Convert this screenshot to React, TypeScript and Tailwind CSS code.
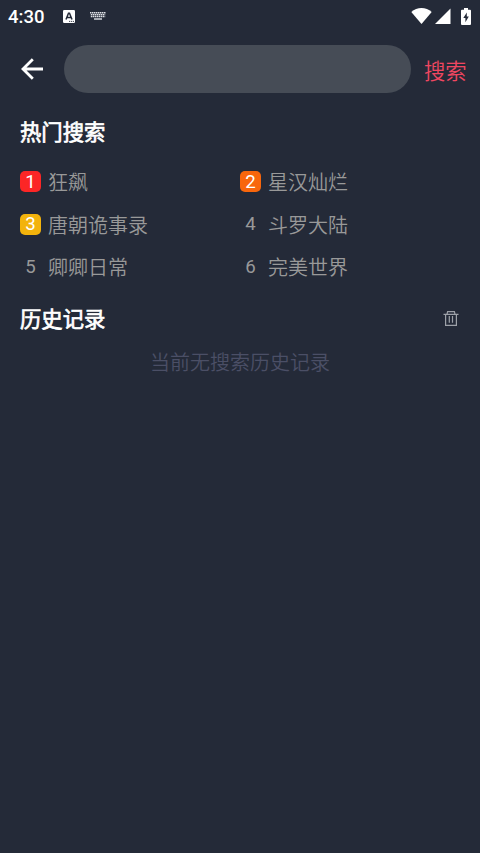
import clsx from "clsx";

interface HotItem {
  rank: number;
  title: string;
}

const hotItems: HotItem[] = [
  { rank: 1, title: "狂飙" },
  { rank: 2, title: "星汉灿烂" },
  { rank: 3, title: "唐朝诡事录" },
  { rank: 4, title: "斗罗大陆" },
  { rank: 5, title: "卿卿日常" },
  { rank: 6, title: "完美世界" },
];

const rankColors: Record<number, string> = {
  1: "bg-[#fc2626] text-white",
  2: "bg-[#f8660c] text-white",
  3: "bg-[#f3b30c] text-white",
};

function StatusBar() {
  return (
    <div className="flex h-8 items-center justify-between pl-2 pr-[9px] text-white">
      <div className="flex items-center">
        <span className="w-[55px] pt-px text-[18.5px] leading-8 font-medium">4:30</span>
        <svg className="h-[13px] w-3" viewBox="0 0 12 13">
          <rect width="12" height="13" rx="1.2" fill="#fff" />
          <path d="M3 9.5 L5.5 3.3 H6.5 L9 9.5 M4 7.4 H8" fill="none" stroke="#242a38" strokeWidth="1.5" />
          <path d="M6 11.4 H11" stroke="#242a38" strokeWidth="0.9" strokeDasharray="1.2 0.7" />
        </svg>
        <svg className="ml-[15px] h-2 w-4" viewBox="0 0 16 8">
          <path d="M0 0.8 H16 M0.8 2.7 H15.2 M0.8 4.6 H15.2" stroke="#dfe1e6" strokeWidth="1.4" strokeDasharray="1.5 0.5" />
          <path d="M4 7 H12" stroke="#dfe1e6" strokeWidth="1.4" />
        </svg>
      </div>
      <div className="flex items-center">
        <svg className="h-4 w-[21px]" viewBox="0 0 21 16">
          <path d="M0.3 4 C6 -1.2 15 -1.2 20.7 4 L10.5 16 Z" fill="#fff" />
        </svg>
        <svg className="ml-[3px] h-4 w-4" viewBox="0 0 16 16">
          <path d="M15.5 0.5 V16 H0 Z" fill="#fff" />
        </svg>
        <svg className="ml-[10px] h-[17px] w-[10px]" viewBox="0 0 10 17">
          <path d="M3 0 H7 V1.8 H9 Q10 1.8 10 2.8 V16 Q10 17 9 17 H1 Q0 17 0 16 V2.8 Q0 1.8 1 1.8 H3 Z" fill="#fff" />
          <path d="M5.8 4.5 L2.3 10 H4.4 V14.3 L7.8 8.6 H5.8 Z" fill="#242a38" />
        </svg>
      </div>
    </div>
  );
}

function SearchHeader() {
  return (
    <header className="flex h-[74px] items-center pr-[13px] pl-[21px]">
      <button type="button" aria-label="返回">
        <svg className="h-[22px] w-[23px]" viewBox="0 0 23 22" fill="none" stroke="#fff" strokeWidth="2.8">
          <path d="M22 11 H2.5 M11.8 1.2 L2 11 L11.8 20.8" />
        </svg>
      </button>
      <input
        type="text"
        aria-label="搜索"
        className="ml-5 h-12 w-[347px] rounded-full bg-[#464c56] px-5 text-white outline-none"
      />
      <button type="button" className="ml-[13px] pt-[5px] text-[21.33px] leading-8 font-[350] whitespace-nowrap text-[#f04761]">
        搜索
      </button>
    </header>
  );
}

function HotRow({ rank, title }: HotItem) {
  return (
    <li className="flex h-[42.67px] items-center">
      <span
        className={clsx(
          "flex h-[21px] w-[21px] items-center justify-center rounded-[5px] pt-px text-[18.67px] leading-none",
          rankColors[rank] ?? "text-[#999999]",
        )}
      >
        {rank}
      </span>
      <span className="ml-[7px] pt-[3px] text-[20px] leading-7 font-[350] text-[#999999]">{title}</span>
    </li>
  );
}

export default function App() {
  return (
    <div className="h-[853px] w-[480px] overflow-hidden bg-[#242a38] font-[Roboto,'Noto_Sans_CJK_SC',sans-serif]">
      <StatusBar />
      <SearchHeader />
      <main className="px-5">
        {/* Hot searches */}
        <h2 className="mt-[11px] text-[21.33px] leading-8 font-normal text-white [-webkit-text-stroke:0.7px]">热门搜索</h2>
        <ul className="mt-[11.1px] grid grid-cols-2">
          {hotItems.map((item) => (
            <HotRow key={item.rank} {...item} />
          ))}
        </ul>

        {/* Search history */}
        <div className="mt-[14.9px] flex h-[33px] items-center justify-between">
          <h2 className="pt-px text-[21.33px] leading-8 font-normal text-white [-webkit-text-stroke:0.7px]">历史记录</h2>
          <button type="button" aria-label="清空" className="mr-px mb-[2px]">
            <svg className="h-[15px] w-4" viewBox="0 0 16 15" fill="none" stroke="#9da1a8" strokeWidth="1.2">
              <path d="M0.5 3.4 H15.5 M4 3.2 L4.6 0.7 H11.4 L12 3.2 M2.6 3.6 V14.3 H13.4 V3.6 M6.3 5 V11.8 M9.5 5 V11.8" />
            </svg>
          </button>
        </div>
        <p className="mt-[11px] text-center text-[20px] leading-8 font-[350] text-[#4b4f66]">当前无搜索历史记录</p>
      </main>
    </div>
  );
}
